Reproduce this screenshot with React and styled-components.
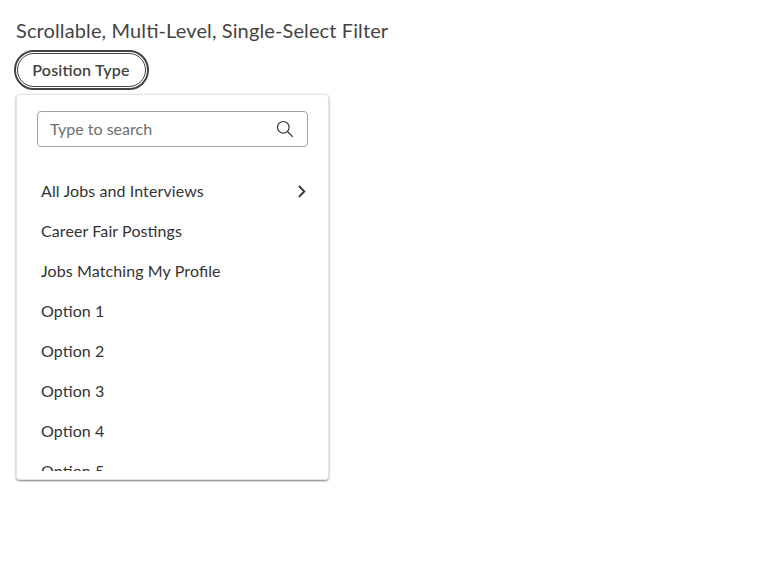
import React from 'react';
import styled, { createGlobalStyle } from 'styled-components';

const Global = createGlobalStyle`
  *, *::before, *::after { box-sizing: border-box; }
  body { margin: 0; background: #fff; color: #333; font: 400 16px/24px Lato, sans-serif; font-feature-settings: "liga" 1; }
  button, input { font: inherit; color: inherit; }
`;
const Page = styled.main`
  padding: 15px 16px;
  display: flex;
  flex-direction: column;
  align-items: flex-start;
`;
const Title = styled.h1`
  margin: 0 0 8px;
  font-size: 20px;
  line-height: 30px;
  font-weight: 400;
  letter-spacing: 0.12px;
  color: #444;
`;
const Pill = styled.button`
  margin-left: 1px;
  height: 34px;
  width: 129px;
  padding: 0 1px 0 0;
  border: 1px solid #444;
  border-radius: 17px;
  background: #fff;
  font-weight: 600;
  font-feature-settings: "liga" 1;
  letter-spacing: 0.18px;
  color: #444;
  outline: 2px solid #444;
  outline-offset: 1px;
`;
const Panel = styled.section`
  width: 313px;
  height: 386px;
  margin-top: 7px;
  padding: 16px 20px 8px;
  display: flex;
  flex-direction: column;
  border: 1px solid #e4e4e4;
  border-radius: 4px;
  box-shadow: 0 1px 2px rgba(0,0,0,.5);
`;
const Search = styled.label`
  flex: none;
  height: 36px;
  display: flex;
  align-items: center;
  padding: 0 12px;
  border: 1px solid #a0a0a0;
  border-radius: 4px;
`;
const Input = styled.input`
  flex: 1;
  min-width: 0;
  padding: 0;
  border: 0;
  outline: 0;
  background: none;
  &::placeholder { color: #6e6e6e; opacity: 1; }
`;
const List = styled.ul`
  flex: 1;
  min-height: 0;
  margin: 24px 0 0;
  padding: 0;
  list-style: none;
  overflow: hidden;
  letter-spacing: 0.1px;
`;
const Item = styled.li`
  height: 40px;
  padding: 0 0 0 4px;
  display: flex;
  align-items: center;
  justify-content: space-between;
`;

const options = ['All Jobs and Interviews', 'Career Fair Postings', 'Jobs Matching My Profile', 'Option 1', 'Option 2', 'Option 3', 'Option 4', 'Option 5'];

export default function App() {
  return (
    <Page>
      <Global />
      <Title>Scrollable, Multi-Level, Single-Select Filter</Title>
      <Pill>Position Type</Pill>
      <Panel>
        <Search>
          <Input placeholder="Type to search" />
          <svg width="20" height="20" viewBox="0 0 20 20" fill="none" stroke="#333" strokeWidth="1.2"><circle cx="8.3" cy="8.3" r="5.8" /><path d="M12.5 12.5L17.8 17.8" /></svg>
        </Search>
        <List>
          {options.map((o, i) => (
            <Item key={o}>{o}{i === 0 && <svg width="12" height="16" viewBox="0 0 12 16" fill="none" stroke="#333" strokeWidth="1.9"><path d="M2.9 3l5.4 5.4-5.4 5.4" /></svg>}</Item>
          ))}
        </List>
      </Panel>
    </Page>
  );
}
